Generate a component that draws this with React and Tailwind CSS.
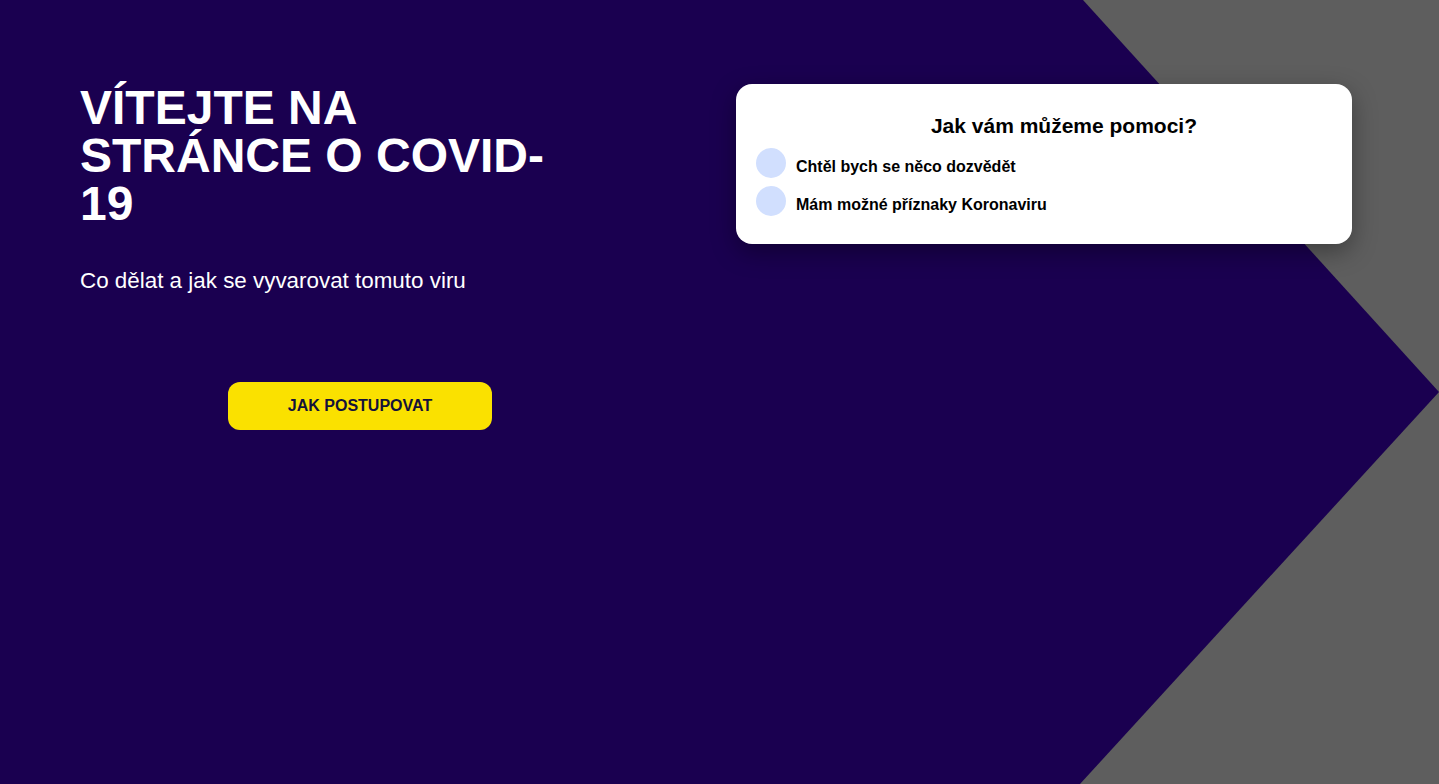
export default function App() {
  return (
    <div className="relative w-full h-[784px] overflow-hidden bg-[#5e5e5e] font-['Liberation_Sans',Arial,sans-serif]">
      <div className="absolute inset-0 bg-[#1a0050] [clip-path:polygon(0_0,1083px_0,100%_392px,1080px_100%,0_100%)]" />
      <div className="relative flex items-start pl-20 pt-[84px] gap-24">
        <div className="w-[560px] flex flex-col">
          <h1 className="max-w-[475px] text-white font-bold text-5xl leading-[48px]">
            VÍTEJTE NA STRÁNCE O COVID-19
          </h1>
          <p className="mt-[39px] text-white text-[22.4px] leading-7">
            Co dělat a jak se vyvarovat tomuto viru
          </p>
          <button className="mt-[87px] mx-auto w-[264px] h-12 rounded-xl bg-[#fae100] text-[#14123a] font-bold text-base">
            JAK POSTUPOVAT
          </button>
        </div>
        <div className="w-[616px] bg-white rounded-2xl shadow-[0_8px_24px_rgba(0,0,0,0.35)] pl-5 pr-5 pt-7 pb-7 text-black">
          <h2 className="pl-10 text-center font-bold text-[21px] leading-7">Jak vám můžeme pomoci?</h2>
          <div className="mt-2 flex flex-col gap-2">
            <label className="flex items-start gap-2.5 h-[30px]">
              <span className="w-[30px] h-[30px] rounded-full bg-[#d1dffe] shrink-0" />
              <span className="pt-[7px] leading-6 font-bold text-base">Chtěl bych se něco dozvědět</span>
            </label>
            <label className="flex items-start gap-2.5 h-[30px]">
              <span className="w-[30px] h-[30px] rounded-full bg-[#d1dffe] shrink-0" />
              <span className="pt-[7px] leading-6 font-bold text-base">Mám možné příznaky Koronaviru</span>
            </label>
          </div>
        </div>
      </div>
    </div>
  );
}
